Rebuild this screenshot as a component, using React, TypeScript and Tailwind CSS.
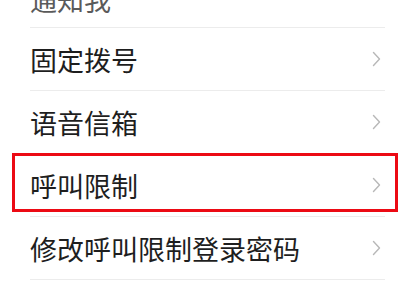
const rows = [
  { label: "固定拨号" },
  { label: "语音信箱" },
  { label: "呼叫限制", marked: true },
  { label: "修改呼叫限制登录密码" },
];

const Chevron = () => (
  <svg width="9" height="16" viewBox="0 0 9 16" fill="none" className="shrink-0">
    <polyline points="1.5,1.5 7.5,8 1.5,14.5" stroke="#b8b8b8" strokeWidth="1.4" strokeLinecap="round" strokeLinejoin="round" />
  </svg>
);

export default function App() {
  return (
    <div
      className="w-[400px] h-[300px] overflow-hidden bg-white"
      style={{ fontFamily: '"Noto Sans CJK SC", "Noto Sans", sans-serif' }}
    >
      <div className="-mt-[35px] ml-[30px] mr-[15px]">
        <div className="h-[63px] flex items-center pt-[6px] border-b border-[#ececec] text-[27px] leading-none text-[#5a5a5a]">
          通知我
        </div>
        {rows.map((row) => (
          <div
            key={row.label}
            className="relative h-[63px] flex items-center justify-between border-b border-[#ececec] pr-[4px]"
          >
            <span className="text-[27px] text-[#1e1e1e] leading-none">{row.label}</span>
            <Chevron />
            {row.marked && (
              <div className="absolute -left-[18px] -right-[13px] -top-[1px] h-[59px] border-[3px] border-[#ec0a14]" />
            )}
          </div>
        ))}
      </div>
    </div>
  );
}
